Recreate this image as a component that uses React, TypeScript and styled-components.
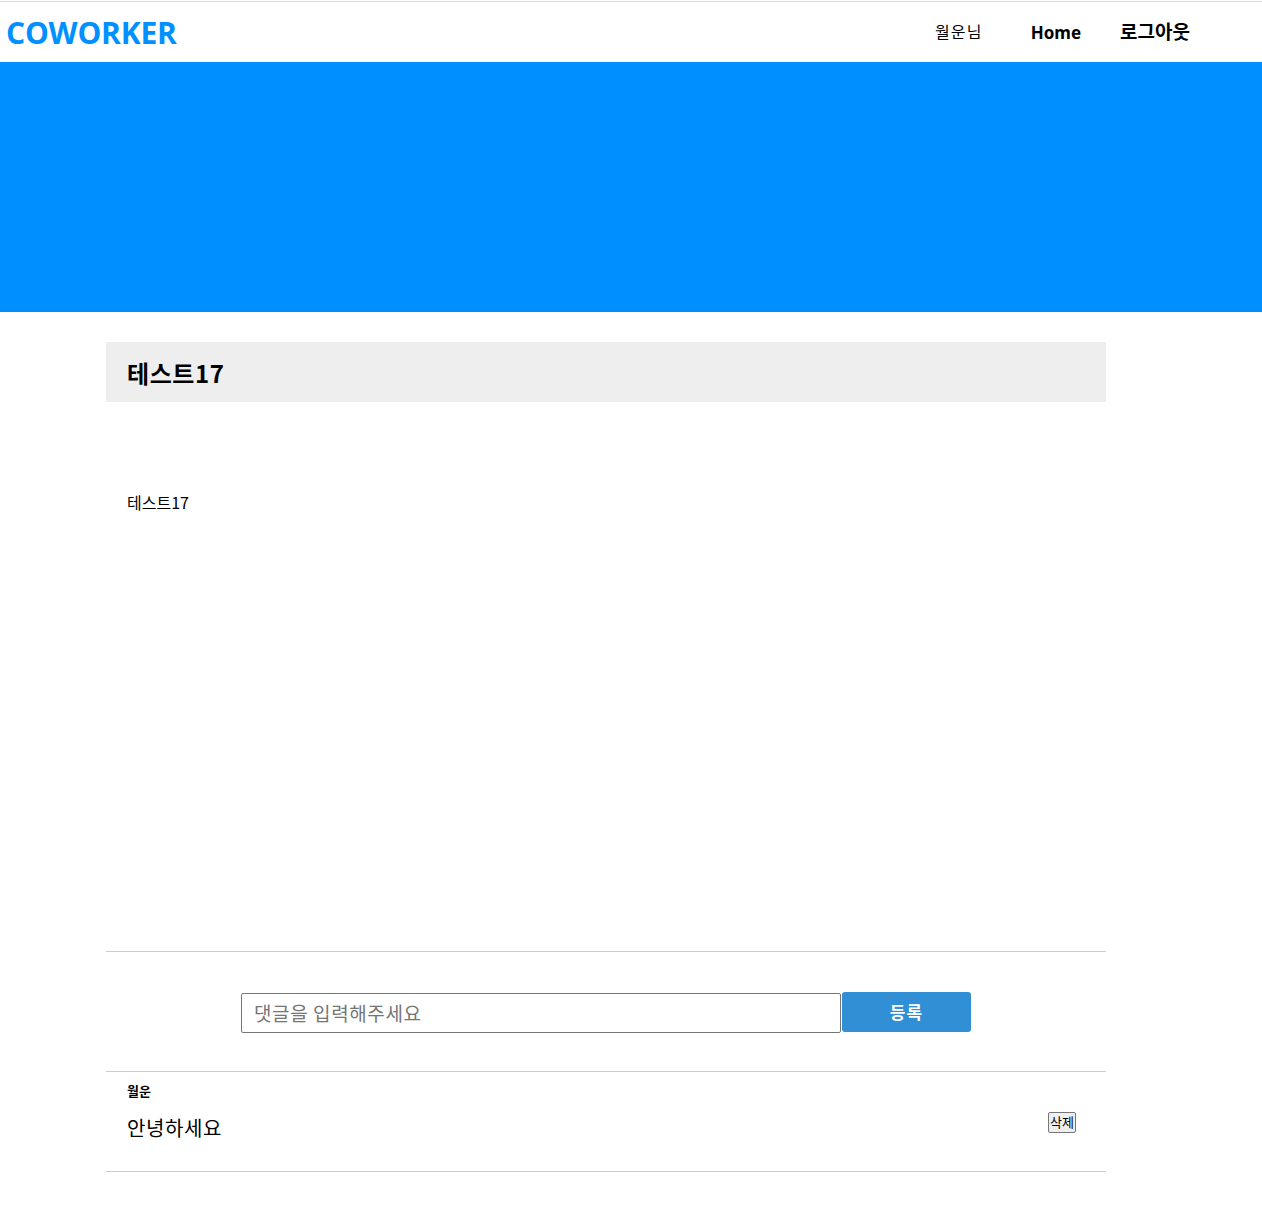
import React from "react";
import styled, { createGlobalStyle } from "styled-components";

const Global = createGlobalStyle`
  body {
    margin: 0;
    background: #fff;
    font-family: "Noto Sans CJK KR", "Noto Sans", sans-serif;
    color: #000;
  }
`;

const Header = styled.header`
  margin-top: 1px;
  border-top: 1px solid #dcdcdc;
  height: 60px;
  display: flex;
  align-items: center;
  justify-content: space-between;
  padding: 0 0 0 6px;
`;

const Logo = styled.div`
  font-family: "Open Sans", "Noto Sans", sans-serif;
  font-weight: 700;
  font-size: 30px;
  letter-spacing: -0.2px;
  color: #0090ff;
  line-height: 1;
  margin-top: 2px;
`;

const Nav = styled.nav`
  display: flex;
  align-items: center;
  margin-right: 72px;
`;

const NavItem = styled.span<{ $size: number; $bold?: boolean; $ml: number; $ls?: number }>`
  font-size: ${(p) => p.$size}px;
  font-weight: ${(p) => (p.$bold ? 700 : 400)};
  margin-left: ${(p) => p.$ml}px;
  letter-spacing: ${(p) => p.$ls ?? 0}px;
  font-family: "Noto Sans", "Noto Sans CJK KR", sans-serif;
  line-height: 1;
`;

const Banner = styled.div`
  height: 250px;
  background: #008ffe;
`;

const Container = styled.main`
  width: 1000px;
  margin: 30px 0 0 106px;
`;

const TitleBox = styled.div`
  height: 60px;
  background: #eeeeee;
  display: flex;
  align-items: center;
  padding-left: 21px;
  font-size: 24px;
  letter-spacing: 0.6px;
  font-weight: 700;
`;

const Body = styled.div`
  height: 550px;
  box-sizing: border-box;
  padding: 88px 21px 0;
  font-size: 16px;
  border-bottom: 1px solid #cccccc;
`;

const Form = styled.form`
  display: flex;
  justify-content: center;
  align-items: center;
  height: 119px;
  border-bottom: 1px solid #cccccc;
`;

const Input = styled.input`
  width: 600px;
  height: 40px;
  box-sizing: border-box;
  border: 1px solid #767676;
  border-radius: 2px;
  padding: 0 12px;
  font-size: 19px;
  letter-spacing: 0.6px;
  font-family: "Noto Sans CJK KR", sans-serif;
  margin-top: 2px;
  &::placeholder {
    color: #757575;
  }
`;

const Submit = styled.button`
  width: 129px;
  height: 40px;
  margin-left: 1px;
  border: none;
  border-radius: 3px;
  background: #318fd5;
  color: #fff;
  font-size: 17px;
  font-weight: 700;
  letter-spacing: 1px;
  font-family: "Noto Sans CJK KR", sans-serif;
`;

const Comment = styled.div`
  height: 99px;
  display: flex;
  align-items: center;
  justify-content: space-between;
  padding: 0 30px 0 21px;
  border-bottom: 1px solid #cccccc;
`;

const CommentText = styled.div`
  display: flex;
  flex-direction: column;
  gap: 13px;
  margin-top: -20px;
`;

const Author = styled.div`
  font-size: 13px;
  font-weight: 700;
`;

const Content = styled.div`
  font-size: 20px;
  letter-spacing: 0.6px;
`;

const Delete = styled.button`
  font-size: 13px;
  font-family: "Noto Sans CJK KR", sans-serif;
  padding: 1px 1px;
  border: 1px solid #767676;
  border-radius: 2px;
  background: #efefef;
  line-height: 1.25;
  margin-top: 2px;
`;

export default function App() {
  return (
    <>
      <Global />
      <Header>
        <Logo>COWORKER</Logo>
        <Nav>
          <NavItem $size={16} $ml={0} $ls={1.2}>월운님</NavItem>
          <NavItem $size={17} $bold $ml={48}>Home</NavItem>
          <NavItem $size={19} $bold $ml={39}>로그아웃</NavItem>
        </Nav>
      </Header>
      <Banner />
      <Container>
        <TitleBox>테스트17</TitleBox>
        <Body>테스트17</Body>
        <Form onSubmit={(e) => e.preventDefault()}>
          <Input placeholder="댓글을 입력해주세요" />
          <Submit type="submit">등록</Submit>
        </Form>
        <Comment>
          <CommentText>
            <Author>월운</Author>
            <Content>안녕하세요</Content>
          </CommentText>
          <Delete type="button">삭제</Delete>
        </Comment>
      </Container>
    </>
  );
}
